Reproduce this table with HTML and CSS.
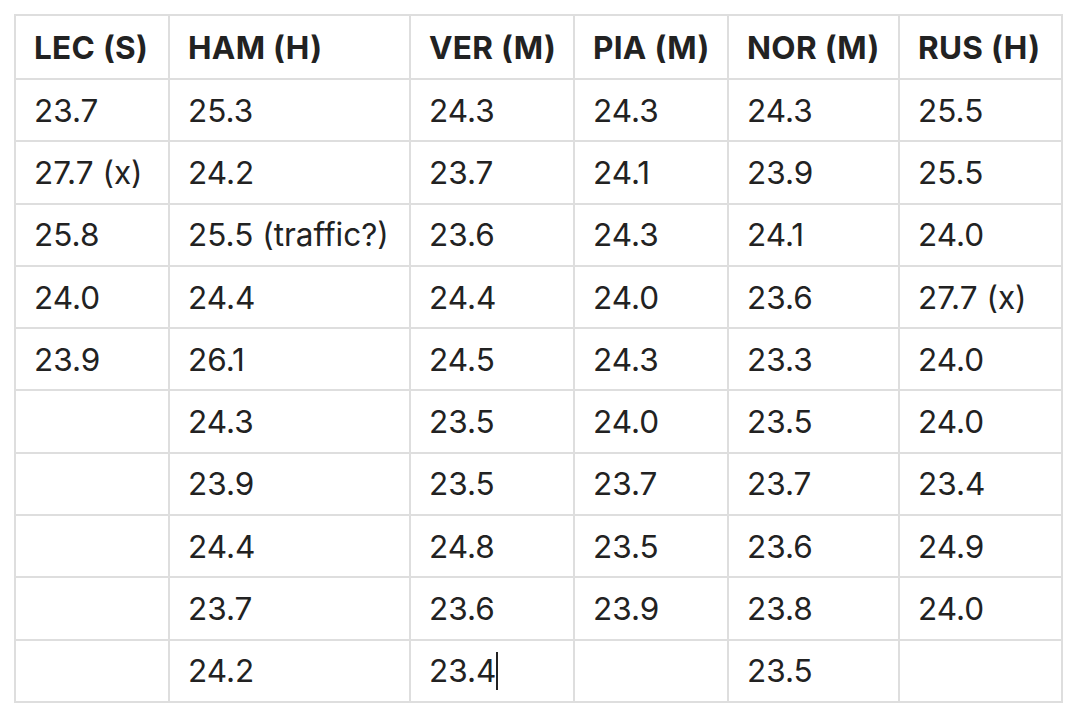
FILE: index.html
```html
<!DOCTYPE html>
<html>
<head>
<meta charset="utf-8">
<link rel="stylesheet" href="styles.css">
</head>
<body>
<table class="laps">
  <colgroup>
    <col class="c1"><col class="c2"><col class="c3"><col class="c4"><col class="c5"><col class="c6">
  </colgroup>
  <thead>
    <tr><th>LEC (S)</th><th>HAM (H)</th><th>VER (M)</th><th>PIA (M)</th><th>NOR (M)</th><th>RUS (H)</th></tr>
  </thead>
  <tbody>
    <tr><td>23.7</td><td>25.3</td><td>24.3</td><td>24.3</td><td>24.3</td><td>25.5</td></tr>
    <tr><td>27.7 (x)</td><td>24.2</td><td>23.7</td><td>24.1</td><td>23.9</td><td>25.5</td></tr>
    <tr><td>25.8</td><td>25.5 (traffic?)</td><td>23.6</td><td>24.3</td><td>24.1</td><td>24.0</td></tr>
    <tr><td>24.0</td><td>24.4</td><td>24.4</td><td>24.0</td><td>23.6</td><td>27.7 (x)</td></tr>
    <tr><td>23.9</td><td>26.1</td><td>24.5</td><td>24.3</td><td>23.3</td><td>24.0</td></tr>
    <tr><td></td><td>24.3</td><td>23.5</td><td>24.0</td><td>23.5</td><td>24.0</td></tr>
    <tr><td></td><td>23.9</td><td>23.5</td><td>23.7</td><td>23.7</td><td>23.4</td></tr>
    <tr><td></td><td>24.4</td><td>24.8</td><td>23.5</td><td>23.6</td><td>24.9</td></tr>
    <tr><td></td><td>23.7</td><td>23.6</td><td>23.9</td><td>23.8</td><td>24.0</td></tr>
    <tr><td></td><td>24.2</td><td>23.4<span class="caret"></span></td><td></td><td>23.5</td><td></td></tr>
  </tbody>
</table>
</body>
</html>
```

FILE: styles.css
```css
html, body {
  margin: 0;
  padding: 0;
  background: #ffffff;
}
body {
  padding: 14px;
  font-family: Inter, "Liberation Sans", sans-serif;
  color: #222222;
}
.laps {
  border-collapse: collapse;
  table-layout: fixed;
  width: 1047px;
  font-size: 31.5px;
}
.c1 { width: 154px; }
.c2 { width: 241px; }
.c3 { width: 164px; }
.c4 { width: 154px; }
.c5 { width: 171px; }
.c6 { width: 163px; }
.laps th, .laps td {
  border: 2px solid #dedede;
  padding: 0 0 0 18px;
  height: 62.3px;
  text-align: left;
  white-space: nowrap;
  vertical-align: middle;
  box-sizing: border-box;
}
.laps th {
  font-weight: 700;
  height: 64px;
  letter-spacing: 0.3px;
}
.laps td {
  font-weight: 400;
}
.caret {
  display: inline-block;
  width: 2px;
  height: 38px;
  background: #222;
  vertical-align: middle;
  margin-top: -6px;
}
```
